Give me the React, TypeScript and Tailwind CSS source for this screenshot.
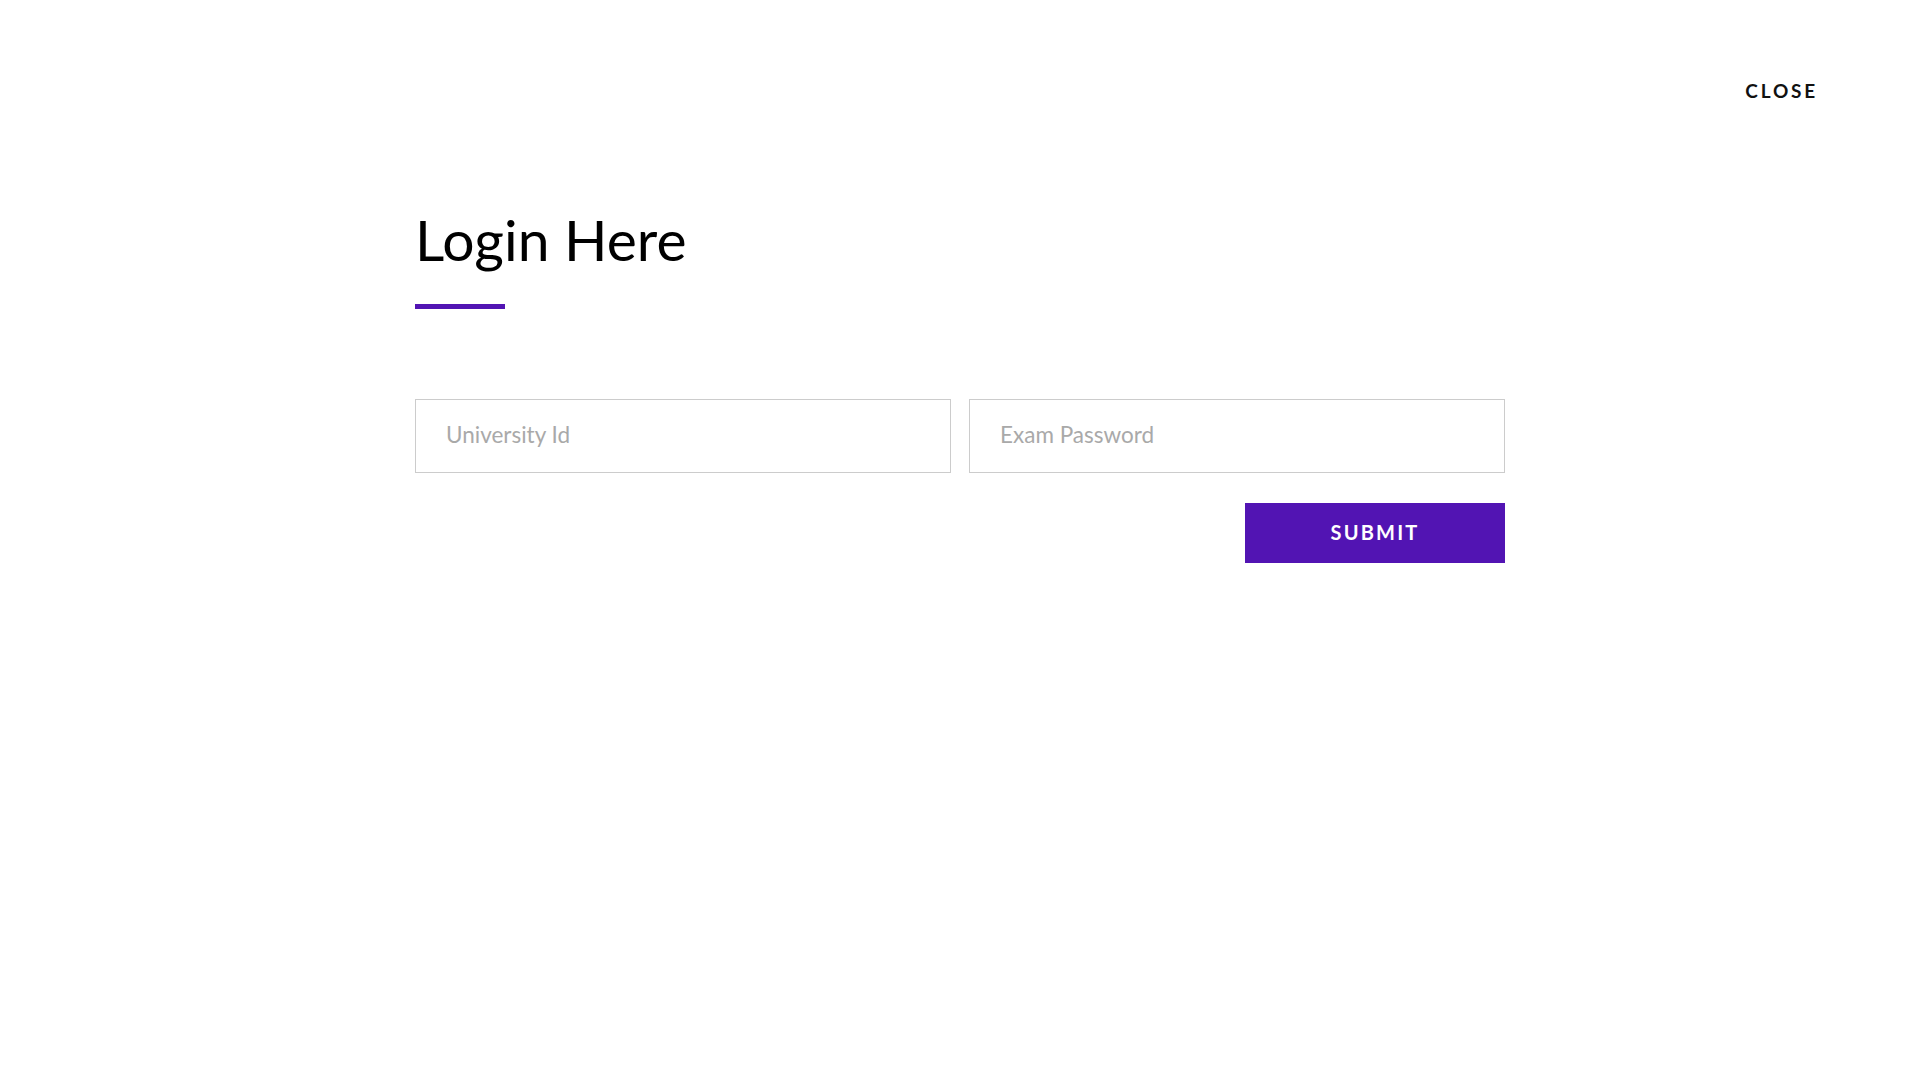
import React from "react";

export default function App() {
  return (
    <div className="min-h-screen w-full bg-white font-['Lato',sans-serif]">
      <div className="flex justify-end pt-[81px] pr-[102px]">
        <button className="text-[19px] leading-none font-bold tracking-[2.8px] text-[#111] uppercase">
          Close
        </button>
      </div>
      <div className="mx-auto w-[1090px] pt-[111px]">
        <h1 className="text-[57px] leading-none font-normal text-black">Login Here</h1>
        <div className="mt-[36px] h-[5px] w-[90px] bg-[#5214b3]" />
        <div className="mt-[90px] flex gap-[18px]">
          <input
            type="text"
            placeholder="University Id"
            className="h-[74px] flex-1 border border-[#cccccc] pl-[30px] pr-[30px] pb-[3px] text-[22.5px] text-[#333] placeholder:text-[#a9a9a9] outline-none"
          />
          <input
            type="password"
            placeholder="Exam Password"
            className="h-[74px] flex-1 border border-[#cccccc] pl-[30px] pr-[30px] pb-[3px] text-[22.5px] text-[#333] placeholder:text-[#a9a9a9] outline-none"
          />
        </div>
        <div className="mt-[30px] flex justify-end">
          <button className="flex h-[60px] w-[260px] items-center justify-center bg-[#5214b3] pb-[2px] text-[20px] font-bold tracking-[2.2px] text-white uppercase">
            Submit
          </button>
        </div>
      </div>
    </div>
  );
}
